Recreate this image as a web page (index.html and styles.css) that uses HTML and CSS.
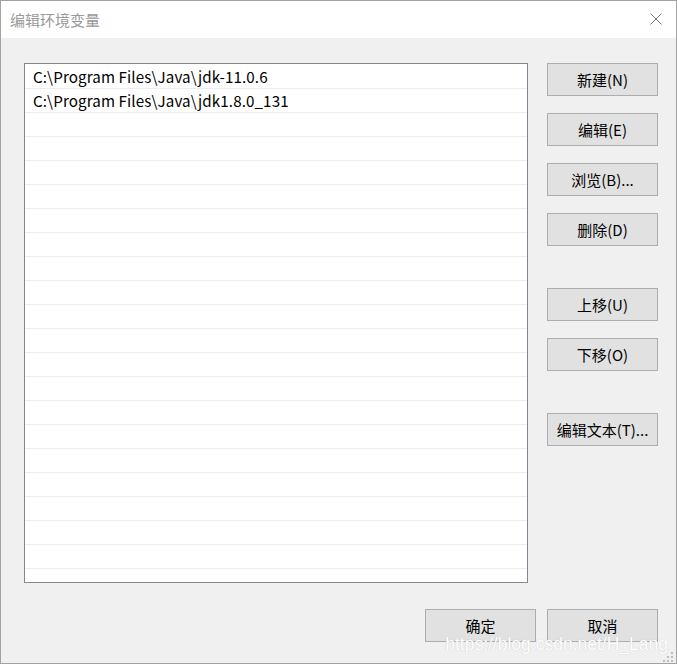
FILE: index.html
```html
<!DOCTYPE html>
<html lang="zh-CN">
<head>
<meta charset="utf-8">
<title>编辑环境变量</title>
<link rel="stylesheet" href="styles.css">
</head>
<body>
<div class="window">
  <div class="titlebar">
    <span class="title">编辑环境变量</span>
    <svg class="close" width="12" height="12" viewBox="0 0 12 12"><path d="M0.5 0.5 L11.5 11.5 M11.5 0.5 L0.5 11.5" stroke="#777" stroke-width="1" fill="none"/></svg>
  </div>
  <div class="body">
    <div class="main">
      <div class="list">
        <div class="row">C:\Program Files\Java\jdk-11.0.6</div>
        <div class="row">C:\Program Files\Java\jdk1.8.0_131</div>
        <div class="row"></div><div class="row"></div><div class="row"></div><div class="row"></div>
        <div class="row"></div><div class="row"></div><div class="row"></div><div class="row"></div>
        <div class="row"></div><div class="row"></div><div class="row"></div><div class="row"></div>
        <div class="row"></div><div class="row"></div><div class="row"></div><div class="row"></div>
        <div class="row"></div><div class="row"></div><div class="row"></div><div class="row"></div>
      </div>
      <div class="side">
        <div class="group">
          <button class="btn">新建(N)</button>
          <button class="btn">编辑(E)</button>
          <button class="btn">浏览(B)...</button>
          <button class="btn">删除(D)</button>
        </div>
        <div class="group">
          <button class="btn">上移(U)</button>
          <button class="btn">下移(O)</button>
        </div>
        <div class="group">
          <button class="btn">编辑文本(T)...</button>
        </div>
      </div>
    </div>
    <div class="footer">
      <button class="btn">确定</button>
      <button class="btn">取消</button>
      <span class="watermark">https://blog.csdn.net/H_Lang</span>
    </div>
    <svg class="grip" width="10" height="10" viewBox="0 0 10 10">
      <rect x="8" y="0" width="2" height="2" fill="#bcbcbc"/>
      <rect x="4" y="4" width="2" height="2" fill="#bcbcbc"/>
      <rect x="8" y="4" width="2" height="2" fill="#bcbcbc"/>
      <rect x="0" y="8" width="2" height="2" fill="#bcbcbc"/>
      <rect x="4" y="8" width="2" height="2" fill="#bcbcbc"/>
      <rect x="8" y="8" width="2" height="2" fill="#bcbcbc"/>
    </svg>
  </div>
</div>
</body>
</html>
```
FILE: styles.css
```css
html, body {
  margin: 0;
  padding: 0;
  width: 677px;
  height: 664px;
  overflow: hidden;
  background: #f0f0f0;
}
.window {
  box-sizing: border-box;
  width: 677px;
  height: 664px;
  border: 1px solid #a3a3a3;
  display: flex;
  flex-direction: column;
  font-family: "Noto Sans CJK SC", "Noto Sans", sans-serif;
  color: #000;
}
.titlebar {
  height: 37px;
  background: #fff;
  display: flex;
  align-items: center;
  justify-content: space-between;
  padding: 0 14px 0 9px;
  flex: none;
}
.title {
  font-size: 15px;
  color: #999;
  margin-top: -1px;
}
.close {
  margin-top: -2px;
}
.body {
  flex: 1;
  background: #f0f0f0;
  position: relative;
}
.main {
  display: flex;
  padding: 25px 0 0 23px;
}
.list {
  box-sizing: border-box;
  width: 504px;
  height: 520px;
  border: 1px solid #828790;
  padding-top: 1px;
  background: #fff;
  overflow: hidden;
}
.row {
  box-sizing: border-box;
  height: 24px;
  border-bottom: 1px solid #ececec;
  padding-left: 8px;
  font-size: 15.2px;
  line-height: 23px;
  letter-spacing: 0.1px;
}
.side {
  margin-left: 19px;
  display: flex;
  flex-direction: column;
  gap: 42px;
}
.group {
  display: flex;
  flex-direction: column;
  gap: 17px;
}
.btn {
  box-sizing: border-box;
  width: 111px;
  height: 33px;
  border: 1px solid #adadad;
  background: #e1e1e1;
  font-family: "Noto Sans CJK SC", "Noto Sans", sans-serif;
  font-size: 15px;
  color: #000;
  padding: 0;
  margin: 0;
}
.footer {
  display: flex;
  justify-content: flex-end;
  gap: 11px;
  padding: 26px 18px 0 0;
  position: relative;
}
.watermark {
  position: absolute;
  right: 8px;
  top: 51px;
  font-family: "Liberation Sans", sans-serif;
  font-size: 17.5px;
  color: #ffffff;
  text-shadow: 0 0 1px rgba(170, 170, 170, 0.7);
  pointer-events: none;
}
.grip {
  position: absolute;
  right: 3px;
  bottom: 1px;
}
```
